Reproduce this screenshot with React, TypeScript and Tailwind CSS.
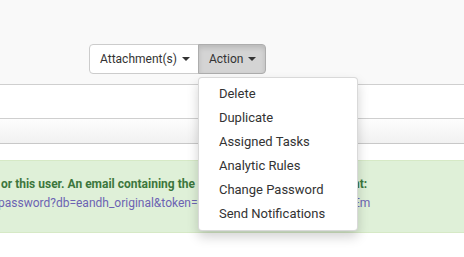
import React from "react";

const menuItems = [
  "Delete",
  "Duplicate",
  "Assigned Tasks",
  "Analytic Rules",
  "Change Password",
  "Send Notifications",
];

function Caret() {
  return (
    <span className="ml-[5px] inline-block h-0 w-0 border-x-[4px] border-t-[4px] border-x-transparent border-t-[#333] align-middle" />
  );
}

export default function App() {
  return (
    <div className="h-[257px] w-[464px] overflow-hidden bg-white font-['Roboto',sans-serif] text-[13px] text-[#333]">
      <div className="flex h-[85px] items-start border-b border-[#cfcfcf] bg-[#f9f9f9] pl-[89px] pt-[44px]">
        <div className="flex text-[12px]">
          <button className="flex h-[30px] items-center rounded-l-[4px] border border-[#ccc] bg-white pl-[10px] pr-[8px] leading-none">
            Attachment(s)
            <Caret />
          </button>
          <div className="relative">
            <button className="-ml-px flex h-[30px] items-center rounded-r-[4px] border border-[#adadad] bg-[#d4d4d4] pl-[10px] pr-[9px] leading-none shadow-[inset_0_3px_5px_rgba(0,0,0,0.125)]">
              Action
              <Caret />
            </button>
            <ul className="absolute left-[-1px] top-full z-10 mt-[3px] w-[160px] rounded-[4px] border border-black/15 bg-white py-[4px] text-[13px] shadow-[0_6px_12px_rgba(0,0,0,0.175)]">
              {menuItems.map((item) => (
                <li key={item} className="px-[20px] py-[3px] leading-[18px] whitespace-nowrap text-[#333]">
                  {item}
                </li>
              ))}
            </ul>
          </div>
        </div>
      </div>
      <div className="h-[34px] border-b border-[#cfcfcf] bg-white" />
      <div className="h-[25px] border-b border-[#c8c8c8] bg-gradient-to-b from-[#fdfdfd] to-[#f1f1f1]" />
      <div className="h-[16px] bg-white" />
      <div className="overflow-hidden whitespace-nowrap border-y border-[#d6e9c6] bg-[#dff0d8] pb-[19px] pt-[14px] text-[12px] leading-[19px]">
        <div className="ml-px font-bold text-[#3c763d]">
          or this user. An email containing the signin link was sent to account:
        </div>
        <div className="-ml-[2px] text-[#6c63b3]">
          password?db=eandh_original&amp;token=5e8c2a91f0d3b7a4c6e91df&amp;Em
        </div>
      </div>
    </div>
  );
}
